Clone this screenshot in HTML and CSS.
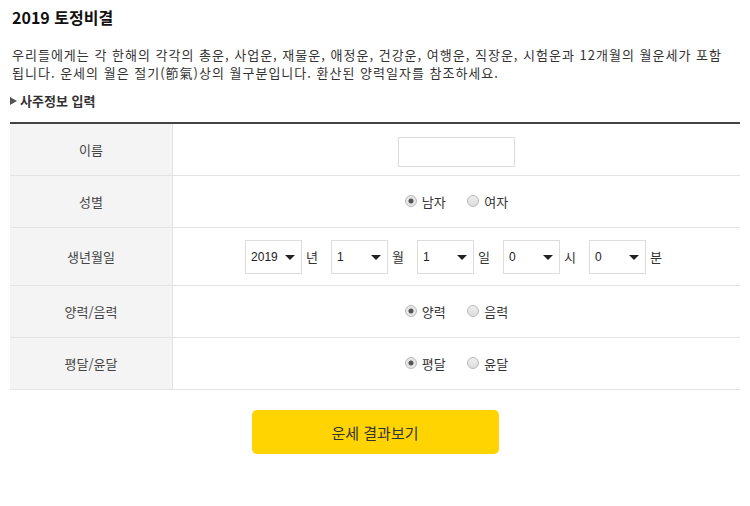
FILE: index.html
```html
<!DOCTYPE html>
<html lang="ko">
<head>
    <meta charset="UTF-8">
    <title>2019 토정비결</title>
    <link rel="stylesheet" href="styles.css">
</head>
<body>
    <h2 class="title">2019 토정비결</h2>
    <p class="desc">우리들에게는 각 한해의 각각의 총운, 사업운, 재물운, 애정운, 건강운, 여행운, 직장운, 시험운과 12개월의 월운세가 포함됩니다. 운세의 월은 절기(節氣)상의 월구분입니다. 환산된 양력일자를 참조하세요.</p>
    <h3 class="sub"><span class="tri"></span>사주정보 입력</h3>

    <table class="form-table">
        <tr class="r-name">
            <th>이름</th>
            <td><input type="text" class="name-input"></td>
        </tr>
        <tr>
            <th>성별</th>
            <td>
                <label class="radio"><input type="radio" name="sex" checked>남자</label>
                <label class="radio"><input type="radio" name="sex">여자</label>
            </td>
        </tr>
        <tr class="r-birth">
            <th>생년월일</th>
            <td>
                <div class="birth">
                    <span class="sel"><select><option>2019</option></select></span><span class="unit">년</span>
                    <span class="sel"><select><option>1</option></select></span><span class="unit">월</span>
                    <span class="sel"><select><option>1</option></select></span><span class="unit">일</span>
                    <span class="sel"><select><option>0</option></select></span><span class="unit">시</span>
                    <span class="sel"><select><option>0</option></select></span><span class="unit">분</span>
                </div>
            </td>
        </tr>
        <tr>
            <th>양력/음력</th>
            <td>
                <label class="radio"><input type="radio" name="cal" checked>양력</label>
                <label class="radio"><input type="radio" name="cal">음력</label>
            </td>
        </tr>
        <tr>
            <th>평달/윤달</th>
            <td>
                <label class="radio"><input type="radio" name="leap" checked>평달</label>
                <label class="radio"><input type="radio" name="leap">윤달</label>
            </td>
        </tr>
    </table>

    <div class="btn-wrap">
        <button class="btn">운세 결과보기</button>
    </div>
</body>
</html>
```

FILE: styles.css
```css
body {
    margin: 0;
    padding: 0 10px;
    font-family: "Noto Sans CJK KR", "Noto Sans", sans-serif;
    color: #333;
    background: #fff;
}

.title {
    font-size: 16px;
    font-weight: bold;
    color: #111;
    margin: 0;
    padding: 6px 2px 0;
    line-height: 22px;
}

.desc {
    font-size: 13px;
    line-height: 18px;
    margin: 18px 0 0;
    padding-left: 2px;
    width: 718px;
    letter-spacing: 1px;
}

.sub {
    font-size: 13px;
    font-weight: bold;
    margin: 10px 0 0;
    line-height: 18px;
    display: flex;
    align-items: center;
}

.tri {
    width: 0;
    height: 0;
    border-left: 7px solid #555;
    border-top: 4px solid transparent;
    border-bottom: 4px solid transparent;
    margin-right: 3px;
}

.form-table {
    width: 730px;
    margin-top: 12px;
    border-collapse: collapse;
    border-top: 2px solid #444;
    font-size: 13px;
}

.form-table th {
    width: 162px;
    background: #f4f4f4;
    font-weight: normal;
    color: #444;
    border-right: 1px solid #e3e3e3;
    border-bottom: 1px solid #e3e3e3;
    height: 51px;
    padding: 0;
}

.form-table td {
    text-align: center;
    border-bottom: 1px solid #e3e3e3;
    height: 51px;
    padding: 0;
}

.r-birth th, .r-birth td {
    height: 57px;
}

.name-input {
    width: 117px;
    height: 30px;
    box-sizing: border-box;
    border: 1px solid #ddd;
    margin: 4px 0 0 0;
    vertical-align: middle;
}

.radio {
    display: inline-flex;
    align-items: center;
    margin: 0 9px;
    color: #333;
}

.radio input {
    appearance: none;
    -webkit-appearance: none;
    width: 12px;
    height: 12px;
    border-radius: 50%;
    border: 1px solid #bbb;
    background: linear-gradient(#eee, #ddd);
    margin: 0 5px 0 0;
}

.radio input:checked {
    background: radial-gradient(circle, #555 0, #555 2px, #e6e6e6 3px);
}

.birth {
    display: flex;
    justify-content: center;
    align-items: center;
    padding-right: 6px;
}

.sel {
    position: relative;
    display: inline-block;
}

.sel select {
    appearance: none;
    -webkit-appearance: none;
    width: 57px;
    height: 34px;
    border: 1px solid #ddd;
    background: #fff;
    font-family: "Liberation Sans", Arial, sans-serif;
    font-size: 12px;
    color: #222;
    padding: 0 0 0 5px;
    border-radius: 0;
}

.sel::after {
    content: "";
    position: absolute;
    right: 7px;
    top: 15px;
    border-top: 5px solid #222;
    border-left: 5px solid transparent;
    border-right: 5px solid transparent;
}

.unit {
    margin: 0 13px 0 4px;
}

.birth .unit:last-child {
    margin-right: 0;
}

.btn-wrap {
    text-align: center;
    padding-top: 20px;
}

.btn {
    width: 247px;
    height: 44px;
    background: #ffd400;
    border: none;
    border-radius: 5px;
    font-family: "Noto Sans CJK KR", sans-serif;
    font-size: 15px;
    color: #333;
    cursor: pointer;
}
```
